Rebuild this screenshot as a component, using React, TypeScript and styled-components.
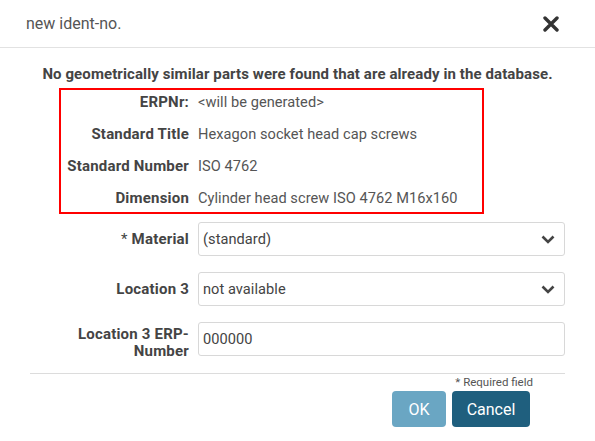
import React from "react";
import styled, { createGlobalStyle } from "styled-components";

const Global = createGlobalStyle`
  html, body { margin: 0; padding: 0; background: #fff; }
  body { font-family: Roboto, "Noto Sans", sans-serif; color: #555; }
  * { box-sizing: border-box; }
`;

const Dialog = styled.div`
  width: 595px;
  height: 441px;
  background: #fff;
  display: flex;
  flex-direction: column;
`;

const Header = styled.div`
  height: 48px;
  border-bottom: 1px solid #e2e2e2;
  display: flex;
  align-items: center;
  justify-content: space-between;
  padding: 0 36px 0 26px;
`;

const Title = styled.div`
  font-size: 16px;
  color: #555;
`;

const CloseButton = styled.button`
  border: 0;
  background: none;
  padding: 0;
  width: 16px;
  height: 16px;
  display: flex;
  cursor: pointer;
`;

const Body = styled.div`
  padding: 16px 30px 0 30px;
  display: flex;
  flex-direction: column;
`;

const Message = styled.div`
  text-align: center;
  font-weight: 700;
  font-size: 15px;
  line-height: 20px;
  color: #444;
  letter-spacing: 0.1px;
  margin-bottom: 4px;
  white-space: nowrap;
`;

const Summary = styled.div`
  margin-left: 29px;
  width: 425px;
  border: 2px solid #ff0000;
  display: grid;
  grid-template-columns: 128px 1fr;
  column-gap: 9px;
  row-gap: 8px;
  padding-bottom: 2px;
`;

const SummaryLabel = styled.div`
  text-align: right;
  font-weight: 700;
  font-size: 15px;
  line-height: 24px;
  color: #444;
  white-space: nowrap;
  letter-spacing: 0.2px;
`;

const SummaryValue = styled.div`
  font-size: 14.6px;
  line-height: 24px;
  color: #555;
  white-space: nowrap;
  letter-spacing: 0.05px;
`;

const Form = styled.div`
  margin-top: 8px;
  display: grid;
  grid-template-columns: 159px 1fr;
  column-gap: 9px;
  row-gap: 16px;
  align-items: center;
`;

const FieldLabel = styled.label<{ $twoLines?: boolean }>`
  text-align: right;
  font-weight: 700;
  font-size: 15px;
  line-height: 17px;
  color: #444;
  letter-spacing: 0.2px;
  margin-top: ${(p) => (p.$twoLines ? "4px" : "0")};
  margin-bottom: ${(p) => (p.$twoLines ? "-4px" : "0")};
`;

const Required = styled.span`
  font-weight: 400;
  margin-right: 4px;
`;

const Control = styled.div`
  height: 34px;
  border: 1px solid #d8d8d8;
  border-radius: 3px;
  display: flex;
  align-items: center;
  justify-content: space-between;
  padding: 0 9px 0 4px;
  font-size: 14.6px;
  color: #444;
  letter-spacing: 0.05px;
`;

const Divider = styled.div`
  margin-top: 17px;
  height: 1px;
  background: #dcdcdc;
`;

const Footer = styled.div`
  padding-right: 65px;
  display: flex;
  flex-direction: column;
  align-items: flex-end;
`;

const Hint = styled.div`
  font-size: 11.5px;
  color: #555;
  line-height: 14px;
  margin-top: 1px;
  margin-right: -3px;
`;

const Buttons = styled.div`
  margin-top: 2px;
  display: flex;
  gap: 6px;
`;

const Button = styled.button<{ $primary?: boolean }>`
  height: 36px;
  width: ${(p) => (p.$primary ? "54px" : "78px")};
  padding: 0;
  border: 0;
  border-radius: 4px;
  background: ${(p) => (p.$primary ? "#6aa6c3" : "#1f5f7e")};
  color: #fff;
  font-family: inherit;
  font-size: 16px;
`;

const Chevron = () => (
  <svg width="14" height="9" viewBox="0 0 14 9">
    <polyline points="1.5,1.5 7,7 12.5,1.5" fill="none" stroke="#444" strokeWidth="2.6" />
  </svg>
);

const summary: [string, string][] = [
  ["ERPNr:", "<will be generated>"],
  ["Standard Title", "Hexagon socket head cap screws"],
  ["Standard Number", "ISO 4762"],
  ["Dimension", "Cylinder head screw ISO 4762 M16x160"],
];

export default function App() {
  return (
    <Dialog>
      <Global />
      <Header>
        <Title>new ident-no.</Title>
        <CloseButton aria-label="close">
          <svg width="16" height="16" viewBox="0 0 16 16">
            <path d="M2 2 L14 14 M14 2 L2 14" stroke="#333" strokeWidth="3.4" strokeLinecap="round" />
          </svg>
        </CloseButton>
      </Header>
      <Body>
        <Message>No geometrically similar parts were found that are already in the database.</Message>
        <Summary>
          {summary.map(([k, v]) => (
            <React.Fragment key={k}>
              <SummaryLabel>{k}</SummaryLabel>
              <SummaryValue>{v}</SummaryValue>
            </React.Fragment>
          ))}
        </Summary>
        <Form>
          <FieldLabel>
            <Required>*</Required>Material
          </FieldLabel>
          <Control>
            (standard)
            <Chevron />
          </Control>
          <FieldLabel>Location 3</FieldLabel>
          <Control>
            not available
            <Chevron />
          </Control>
          <FieldLabel $twoLines>
            Location 3 ERP-
            <br />
            Number
          </FieldLabel>
          <Control>000000</Control>
        </Form>
        <Divider />
      </Body>
      <Footer>
        <Hint>* Required field</Hint>
        <Buttons>
          <Button $primary>OK</Button>
          <Button>Cancel</Button>
        </Buttons>
      </Footer>
    </Dialog>
  );
}
